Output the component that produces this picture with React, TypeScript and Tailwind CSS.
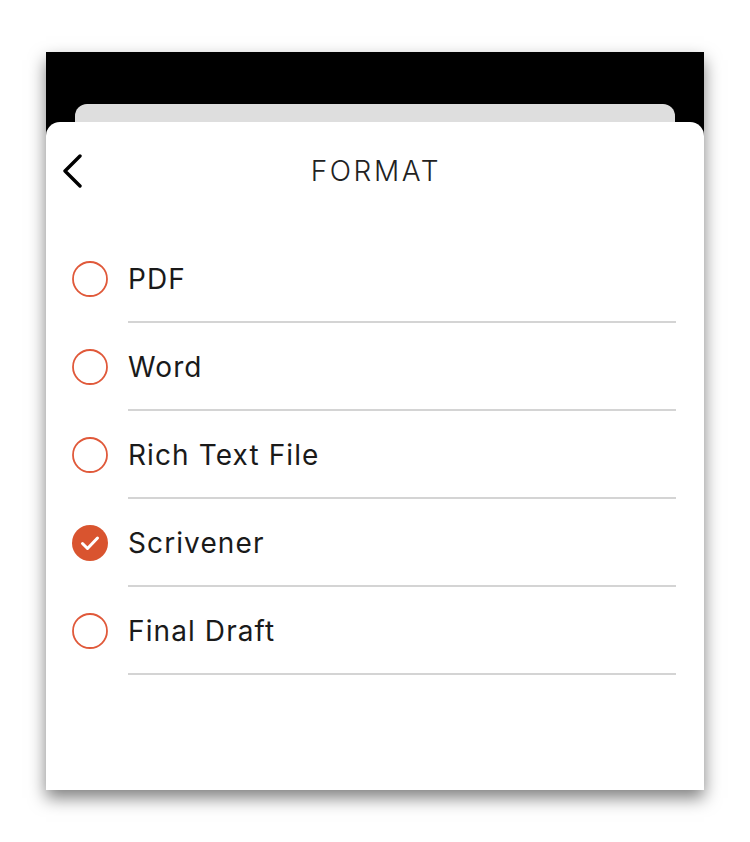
const formats = [
  { label: "PDF", checked: false },
  { label: "Word", checked: false },
  { label: "Rich Text File", checked: false },
  { label: "Scrivener", checked: true },
  { label: "Final Draft", checked: false },
];

const Radio = ({ checked }: { checked: boolean }) => {
  if (checked) {
    return (
      <svg width="36" height="36" viewBox="0 0 36 36">
        <circle cx="18" cy="18" r="18" fill="#d9542f" />
        <polyline
          points="10.5,18.5 15.5,23.5 25.5,13"
          fill="none"
          stroke="white"
          strokeWidth="3"
          strokeLinecap="round"
          strokeLinejoin="round"
        />
      </svg>
    );
  }
  return (
    <svg width="36" height="36" viewBox="0 0 36 36">
      <circle cx="18" cy="18" r="17" fill="none" stroke="#e0593a" strokeWidth="1.8" />
    </svg>
  );
};

export default function App() {
  return (
    <div className="h-[842px] w-[750px] bg-white pt-[52px] pl-[46px] font-['Inter',sans-serif]">
      <div className="flex h-[738px] w-[658px] flex-col bg-black pt-[52px] shadow-[0_8px_16px_rgba(0,0,0,0.5)]">
        <div className="mx-[29px] h-[18px] shrink-0 rounded-t-[12px] bg-[#dedede]" />
        <div className="flex-1 rounded-t-[14px] bg-white">
          <div className="grid h-[98px] grid-cols-[1fr_auto_1fr] items-center">
            <div className="pl-[16px]">
              <svg width="20" height="34" viewBox="0 0 20 34">
                <polyline
                  points="18,2 3,17 18,32"
                  fill="none"
                  stroke="black"
                  strokeWidth="3.4"
                  strokeLinecap="round"
                  strokeLinejoin="round"
                />
              </svg>
            </div>
            <h1 className="pl-[2px] text-[28px] font-light tracking-[2.6px] text-[#222]">FORMAT</h1>
            <div />
          </div>
          <ul className="pt-[15px]">
            {formats.map((f) => (
              <li key={f.label} className="flex items-center pl-[26px]">
                <Radio checked={f.checked} />
                <div className="mr-[28px] ml-[20px] flex h-[88px] flex-1 items-center border-b-2 border-[#d4d4d4] pt-[2px]">
                  <span className="text-[28px] tracking-[1.1px] text-[#1a1a1a]">{f.label}</span>
                </div>
              </li>
            ))}
          </ul>
        </div>
      </div>
    </div>
  );
}
